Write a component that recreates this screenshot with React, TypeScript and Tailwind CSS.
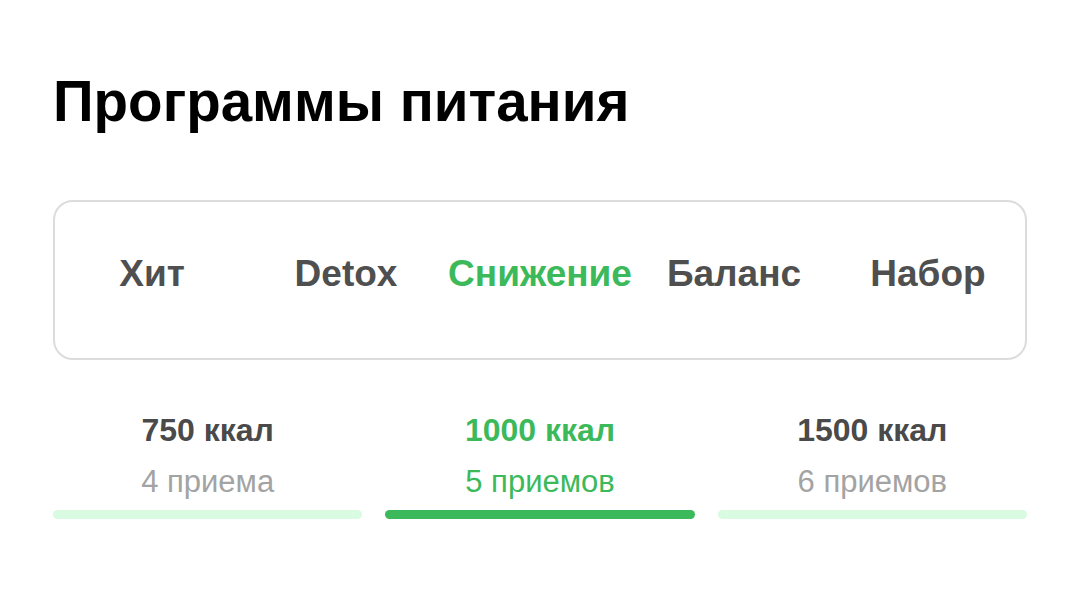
import { useState } from "react";

const TABS = ["Хит", "Detox", "Снижение", "Баланс", "Набор"];

const PLANS = [
  { kcal: "750 ккал", meals: "4 приема" },
  { kcal: "1000 ккал", meals: "5 приемов" },
  { kcal: "1500 ккал", meals: "6 приемов" },
];

export default function App() {
  const [tab, setTab] = useState(2);
  const [plan, setPlan] = useState(1);

  return (
    <div
      className="w-[1080px] h-[603px] bg-white px-[53px] pt-[70px]"
      style={{ fontFamily: '"Liberation Sans", Arial, sans-serif' }}
    >
      <h1 className="text-[56.5px] leading-[64px] font-bold text-black">
        Программы питания
      </h1>

      {/* program type switcher */}
      <div className="mt-[66px] h-[160px] pb-[12px] rounded-[20px] border-2 border-[#dcdcdc] grid grid-cols-5 items-center">
        {TABS.map((t, i) => (
          <button
            key={t}
            onClick={() => setTab(i)}
            className={`text-[37px] leading-[42px] font-bold text-center ${
              i === tab ? "text-[#3cb95a]" : "text-[#4f4f4f]"
            }`}
          >
            {t}
          </button>
        ))}
      </div>

      {/* calorie options */}
      <div className="mt-[52px] grid grid-cols-3 gap-[23px]">
        {PLANS.map((p, i) => {
          const active = i === plan;
          return (
            <button key={p.kcal} onClick={() => setPlan(i)} className="flex flex-col items-center">
              <span
                className={`text-[32px] leading-[36px] font-bold ${
                  active ? "text-[#3cb95a]" : "text-[#4a4a4a]"
                }`}
              >
                {p.kcal}
              </span>
              <span
                className={`mt-[16px] text-[31px] leading-[35px] ${
                  active ? "text-[#3cb95a]" : "text-[#a3a3a3]"
                }`}
              >
                {p.meals}
              </span>
              <span
                className={`mt-[11px] w-full h-[9px] rounded-full ${
                  active ? "bg-[#3cb95a]" : "bg-[#d9fbe2]"
                }`}
              />
            </button>
          );
        })}
      </div>
    </div>
  );
}
